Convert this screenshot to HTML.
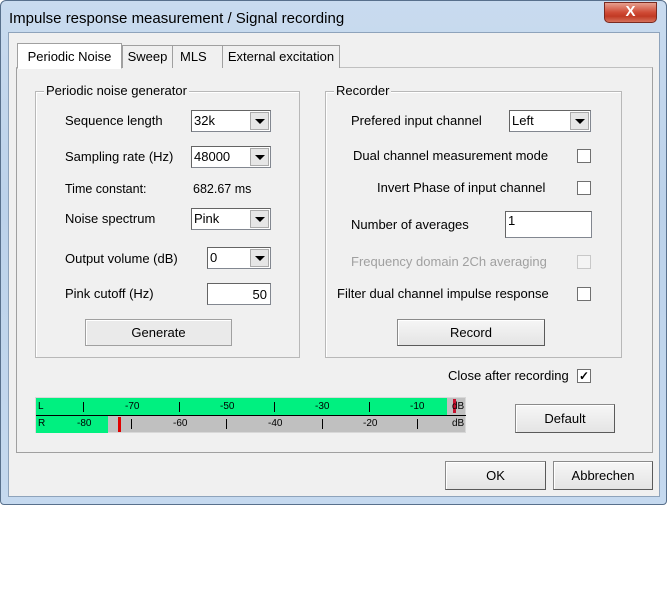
<!DOCTYPE html>
<html><head><style>
*{margin:0;padding:0;box-sizing:border-box}
body{width:670px;height:600px;background:#fff;font-family:"Liberation Sans",sans-serif;font-size:13px;color:#000;position:relative;overflow:hidden}
.a{position:absolute}
.win{left:0;top:0;width:667px;height:505px;background:linear-gradient(#c9dbef,#bcd2ea 40%,#c5d9ef);border:1px solid #58708c;border-radius:6px 6px 4px 4px}
.client{left:8px;top:32px;width:652px;height:465px;background:#f0f0f0;border:1px solid #8ea3bb}
.t{position:absolute;white-space:nowrap;line-height:16px}
.grp{position:absolute;border:1px solid #b8b8b8;box-shadow:1px 1px 0 #fff inset}
.gl{position:absolute;background:#f0f0f0;padding:0 2px;line-height:14px;top:-8px}
.cb{position:absolute;background:#fff;border:1px solid #828790;border-top-color:#646464;border-left-color:#646464;height:22px}
.cb span{position:absolute;left:2px;top:2px}
.dd{position:absolute;right:1px;top:1px;width:19px;height:18px;background:#e6e6e6;border:1px solid #aaa}
.dd:after{content:"";position:absolute;left:4px;top:6px;border-left:5px solid transparent;border-right:5px solid transparent;border-top:5px solid #000}
.chk{position:absolute;width:14px;height:14px;background:#fff;border:1px solid #707070}
.btn{position:absolute;background:linear-gradient(#f6f6f6,#e4e4e4);border:1px solid #8a8a8a;border-right-color:#5a5a5a;border-bottom-color:#5a5a5a;text-align:center;box-shadow:inset 1px 1px 0 #fff}
.tab{position:absolute;top:45px;height:23px;border:1px solid #a0a0a0;border-bottom:none;background:#f0f0f0;text-align:center;line-height:22px}
</style></head><body>
<div class="a win"></div>
<div class="t" style="left:9px;top:10px;font-size:15px;line-height:18px">Impulse response measurement / Signal recording</div>
<div class="a" style="left:604px;top:2px;width:53px;height:21px;border-radius:0 0 5px 5px;background:linear-gradient(#e6a08f,#cf4a35 50%,#c13a24 70%,#d6705a);border:1px solid #7a2a20;color:#fff;text-align:center;font-weight:bold;font-size:15px;line-height:18px">X</div>
<div class="a client"></div>
<!-- tab panel -->
<div class="a" style="left:16px;top:67px;width:637px;height:386px;border:1px solid #a0a0a0;border-top-color:#c0c0c0;background:#f0f0f0"></div>
<div class="tab" style="left:122px;width:51px">Sweep</div>
<div class="tab" style="left:172px;width:51px;text-align:left;padding-left:7px">MLS</div>
<div class="tab" style="left:222px;width:118px">External excitation</div>
<div class="tab" style="left:17px;top:43px;height:26px;width:105px;background:#fff;line-height:26px;border-bottom:1px solid #fff">Periodic Noise</div>

<div class="grp" style="left:35px;top:91px;width:265px;height:267px"><div class="gl" style="left:8px">Periodic noise generator</div></div>
<div class="grp" style="left:325px;top:91px;width:297px;height:267px"><div class="gl" style="left:8px">Recorder</div></div>

<div class="t" style="left:65px;top:113px">Sequence length</div>
<div class="cb" style="left:191px;top:110px;width:80px"><span>32k</span><div class="dd"></div></div>
<div class="t" style="left:65px;top:149px">Sampling rate (Hz)</div>
<div class="cb" style="left:191px;top:146px;width:80px"><span>48000</span><div class="dd"></div></div>
<div class="t" style="left:65px;top:181px;font-size:12.5px">Time constant:</div>
<div class="t" style="left:193px;top:181px;font-size:12.5px">682.67 ms</div>
<div class="t" style="left:65px;top:211px">Noise spectrum</div>
<div class="cb" style="left:191px;top:208px;width:80px"><span>Pink</span><div class="dd"></div></div>
<div class="t" style="left:65px;top:251px">Output volume (dB)</div>
<div class="cb" style="left:207px;top:247px;width:64px"><span>0</span><div class="dd"></div></div>
<div class="t" style="left:65px;top:286px">Pink cutoff (Hz)</div>
<div class="cb" style="left:207px;top:283px;width:64px"><span style="left:auto;right:3px;top:3px">50</span></div>
<div class="btn" style="left:85px;top:319px;width:147px;height:27px;line-height:25px;background:#eaeaea;border-color:#a0a0a0">Generate</div>

<div class="t" style="left:351px;top:113px">Prefered input channel</div>
<div class="cb" style="left:509px;top:110px;width:82px"><span>Left</span><div class="dd"></div></div>
<div class="t" style="left:353px;top:148px">Dual channel measurement mode</div>
<div class="chk" style="left:577px;top:149px"></div>
<div class="t" style="left:377px;top:180px">Invert Phase of input channel</div>
<div class="chk" style="left:577px;top:181px"></div>
<div class="t" style="left:351px;top:217px">Number of averages</div>
<div class="cb" style="left:505px;top:211px;width:87px;height:27px"><span style="top:1px">1</span></div>
<div class="t" style="left:351px;top:254px;color:#a0a0a0">Frequency domain 2Ch averaging</div>
<div class="chk" style="left:577px;top:255px;border-color:#c8c8c8;background:#f4f4f4"></div>
<div class="t" style="left:337px;top:286px">Filter dual channel impulse response</div>
<div class="chk" style="left:577px;top:287px"></div>
<div class="btn" style="left:397px;top:319px;width:148px;height:27px;line-height:25px">Record</div>

<div class="t" style="left:448px;top:368px">Close after recording</div>
<div class="chk" style="left:577px;top:369px;font-size:12px;line-height:12px;text-align:center;font-weight:bold">✓</div>

<!-- meter -->
<div class="a" style="left:35px;top:397px;width:431px;height:36px;background:#c0c0c0;border:1px solid #d8d8d8;font-size:10px">
  <div class="a" style="left:0;top:0;width:411px;height:17px;background:#00f080"></div>
  <div class="a" style="left:0;top:18px;width:72px;height:17px;background:#00f080"></div>
  <div class="a" style="left:0;top:17px;width:430px;height:1px;background:#000"></div>
  <div class="a" style="left:417px;top:1px;width:3px;height:14px;background:#c8102e"></div>
  <div class="a" style="left:82px;top:19px;width:3px;height:15px;background:#e00000"></div>
  <div class="t" style="left:2px;top:2px;line-height:14px">L</div>
  <div class="t" style="left:2px;top:19px;line-height:14px">R</div>
  <div class="t" style="left:89px;top:2px;line-height:14px">-70</div>
  <div class="t" style="left:184px;top:2px;line-height:14px">-50</div>
  <div class="t" style="left:279px;top:2px;line-height:14px">-30</div>
  <div class="t" style="left:374px;top:2px;line-height:14px">-10</div>
  <div class="t" style="left:416px;top:2px;line-height:14px">dB</div>
  <div class="t" style="left:41px;top:19px;line-height:14px">-80</div>
  <div class="t" style="left:137px;top:19px;line-height:14px">-60</div>
  <div class="t" style="left:232px;top:19px;line-height:14px">-40</div>
  <div class="t" style="left:327px;top:19px;line-height:14px">-20</div>
  <div class="t" style="left:416px;top:19px;line-height:14px">dB</div>
  <div class="a" style="left:47px;top:4px;width:1px;height:10px;background:#000"></div>
  <div class="a" style="left:143px;top:4px;width:1px;height:10px;background:#000"></div>
  <div class="a" style="left:238px;top:4px;width:1px;height:10px;background:#000"></div>
  <div class="a" style="left:333px;top:4px;width:1px;height:10px;background:#000"></div>
  <div class="a" style="left:95px;top:21px;width:1px;height:10px;background:#000"></div>
  <div class="a" style="left:190px;top:21px;width:1px;height:10px;background:#000"></div>
  <div class="a" style="left:286px;top:21px;width:1px;height:10px;background:#000"></div>
  <div class="a" style="left:381px;top:21px;width:1px;height:10px;background:#000"></div>
</div>
<div class="btn" style="left:515px;top:404px;width:100px;height:29px;line-height:27px">Default</div>

<div class="btn" style="left:445px;top:461px;width:101px;height:29px;line-height:27px">OK</div>
<div class="btn" style="left:553px;top:461px;width:100px;height:29px;line-height:27px">Abbrechen</div>
</body></html>
